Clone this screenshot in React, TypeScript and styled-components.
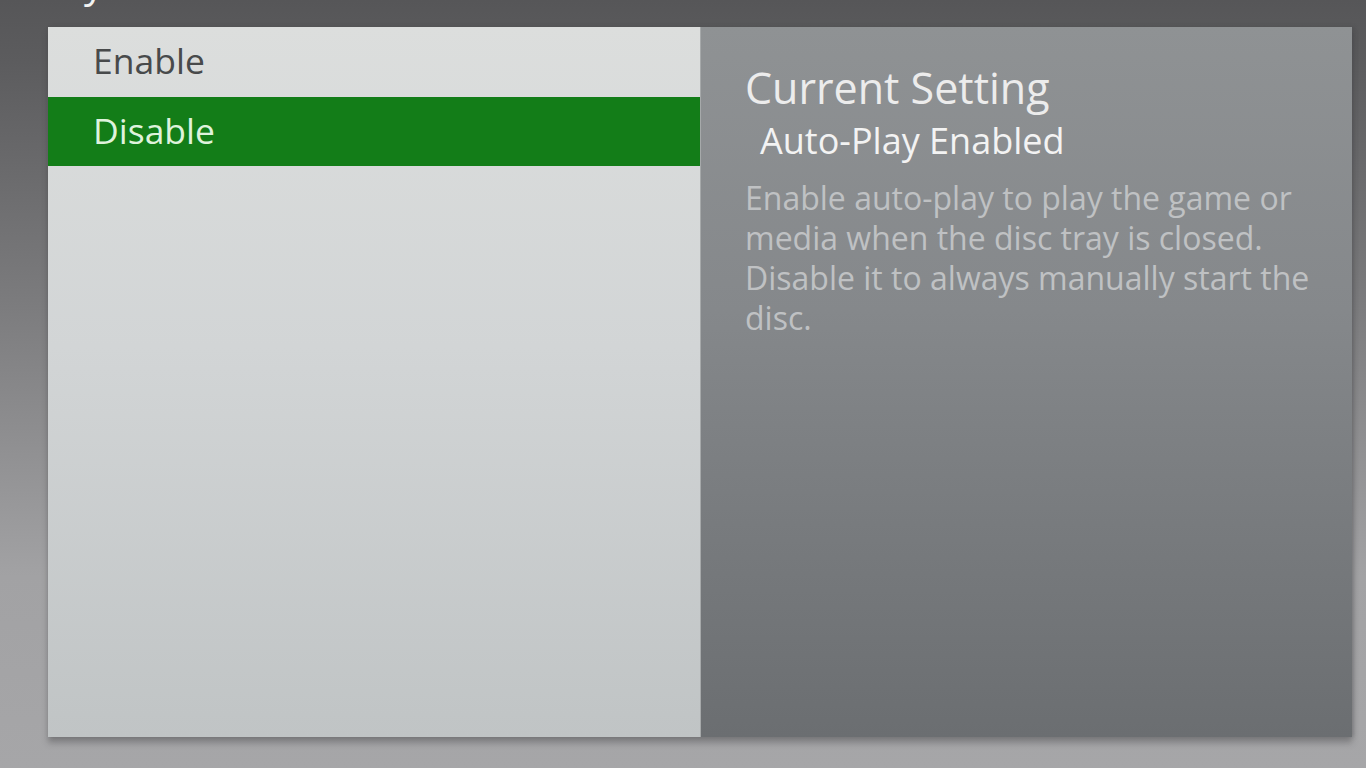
import React from 'react';
import styled, { createGlobalStyle } from 'styled-components';

const GlobalStyle = createGlobalStyle`
    html, body {
        margin: 0;
        padding: 0;
        overflow: hidden;
    }
    body {
        font-family: "Open Sans", "Noto Sans", sans-serif;
    }
`;

const Screen = styled.div`
    width: 1366px;
    height: 768px;
    overflow: hidden;
    background: linear-gradient(180deg, #565658 0%, #5c5c5e 8%, #7c7c7e 40%, #a2a2a4 75%, #a6a6a8 100%);
`;

const Header = styled.div`
    height: 27px;
    overflow: hidden;
    padding-left: 62px;
`;

const Title = styled.div`
    font-size: 40px;
    line-height: 40px;
    color: #f2f2f2;
    margin-top: -38px;
`;

const Panel = styled.div`
    display: grid;
    grid-template-columns: 652px 652px;
    height: 710px;
    margin-left: 48px;
    width: 1304px;
    box-shadow: 0 6px 6px rgba(60, 60, 62, 0.35), 2px 0 4px rgba(60, 60, 62, 0.25);
`;

const ListPane = styled.div`
    background: linear-gradient(180deg, #dcdedd 0%, #d2d5d6 45%, #c0c4c5 100%);
    display: flex;
    flex-direction: column;
`;

const Option = styled.div<{ $active?: boolean }>`
    height: 69.5px;
    display: flex;
    align-items: center;
    padding-left: 45px;
    font-size: 35.5px;
    color: ${p => (p.$active ? '#dff3dc' : '#484a4b')};
    background: ${p => (p.$active ? '#137d18' : 'transparent')};
    box-sizing: border-box;
    padding-bottom: 3px;
`;

const InfoPane = styled.div`
    background: linear-gradient(180deg, #8f9294 0%, #85888b 40%, #6b6e71 100%);
    border-left: 1px solid #a6a9aa;
    padding: 35px 40px 0 44px;
    display: flex;
    flex-direction: column;
`;

const InfoTitle = styled.div`
    font-size: 43px;
    line-height: 52px;
    color: #ececec;
`;

const InfoValue = styled.div`
    font-size: 36px;
    line-height: 54px;
    color: #f3f3f3;
    padding-left: 15px;
    margin-bottom: 10px;
`;

const InfoText = styled.p`
    margin: 0;
    font-size: 32px;
    line-height: 40px;
    color: #bfc1c3;
    width: 580px;
`;

const options = ['Enable', 'Disable'];

const App: React.FC = () => {
    const selected = 1;
    return (
        <Screen>
            <GlobalStyle />
            <Header>
                <Title>System</Title>
            </Header>
            <Panel>
                <ListPane>
                    {options.map((o, i) => (
                        <Option key={o} $active={i === selected}>{o}</Option>
                    ))}
                </ListPane>
                <InfoPane>
                    <InfoTitle>Current Setting</InfoTitle>
                    <InfoValue>Auto-Play Enabled</InfoValue>
                    <InfoText>
                        Enable auto-play to play the game or media when the disc tray is closed. Disable it to always manually start the disc.
                    </InfoText>
                </InfoPane>
            </Panel>
        </Screen>
    );
};

export default App;
